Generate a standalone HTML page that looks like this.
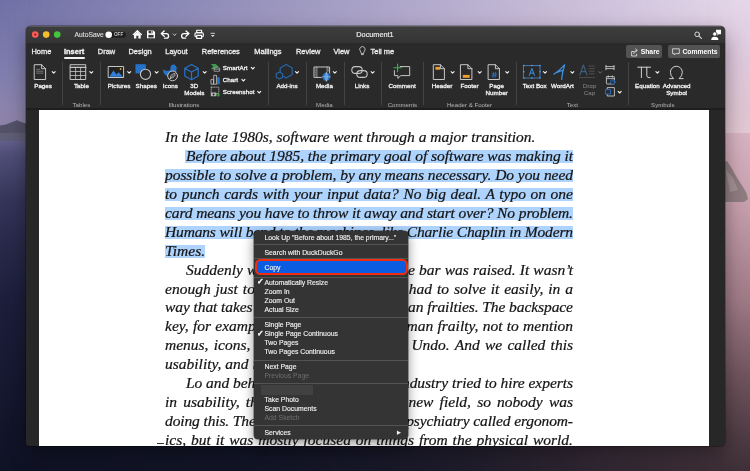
<!DOCTYPE html>
<html lang="en">
<head>
<meta charset="utf-8">
<title>Document1</title>
<style>
*{box-sizing:border-box;margin:0;padding:0}
html,body{width:750px;height:471px;overflow:hidden}
body{position:relative;font-family:"Liberation Sans",sans-serif;background:#1a1c30}
.abs{position:absolute}
#all{position:absolute;left:0;top:0;width:750px;height:471px;will-change:transform}
/* desktop wallpaper */
#bgL{position:absolute;left:0;top:0;width:750px;height:471px;
 background:linear-gradient(to bottom,#6f70a6 0px,#7c7bae 60px,#8a83ad 105px,#8d83a9 122px,#8a80a6 134px,#625f8a 141px,#4f4e78 155px,#34355a 200px,#262848 250px,#1c1f3b 300px,#14172e 400px,#101325 471px)}
#bgRs{position:absolute;left:0;top:0;width:750px;height:133px;
 background:linear-gradient(to bottom,#e6d8ea 0px,#dfc9dc 60px,#dfc5d2 110px,#e2c8d2 133px);
 -webkit-mask-image:linear-gradient(to right,transparent 0px,#000 750px);mask-image:linear-gradient(to right,transparent 0px,#000 750px)}
#bgRw{position:absolute;left:0;top:133px;width:750px;height:338px;
 background:linear-gradient(to bottom,#d6b3c0 0px,#d0aab8 30px,#c8a0ae 67px,#9e7a85 167px,#6d525b 247px,#4d3a42 307px,#3e2f37 338px);
 -webkit-mask-image:linear-gradient(to right,transparent 0px,rgba(0,0,0,.05) 250px,rgba(0,0,0,.15) 375px,rgba(0,0,0,.35) 480px,rgba(0,0,0,.68) 600px,#000 735px);mask-image:linear-gradient(to right,transparent 0px,rgba(0,0,0,.05) 250px,rgba(0,0,0,.15) 375px,rgba(0,0,0,.35) 480px,rgba(0,0,0,.68) 600px,#000 735px)}
#bgS{position:absolute;left:0;top:0;width:750px;height:471px}
/* window */
#win{position:absolute;left:26px;top:26px;width:699px;height:420px;background:#2b2b2b;border-radius:5px 5px 4px 4px;overflow:hidden;box-shadow:0 8px 20px rgba(0,0,0,.38),0 0 0 .5px rgba(0,0,0,.5)}
#titlebar{position:absolute;left:0;top:0;width:699px;height:17px;background:linear-gradient(#3d3d3d,#343434);border-top:1px solid #585858}
#ribbon{position:absolute;left:0;top:17px;width:699px;height:66px;background:#2a2a2a}
#docbg{position:absolute;left:0;top:83px;width:699px;height:337px;background:#272727}
#page{position:absolute;left:13.2px;top:83.6px;width:669.8px;height:337px;background:#fff}
/* document text */
.ln{position:absolute;left:139px;height:19px;font:italic 15.5px/19px "Liberation Serif",serif;color:#141414;white-space:nowrap;-webkit-text-stroke:.22px #141414}
.ln.ind{left:160px}
.hl{position:absolute;height:13.7px;background:#aed3fc}
/* context menu */
#menu{position:absolute;left:254px;top:231px;width:154px;height:208px;background:#343434;border-radius:4px;box-shadow:0 0 0 .5px rgba(0,0,0,.6),0 4px 12px rgba(0,0,0,.45);font-size:6.85px;color:#f4f4f4;-webkit-text-stroke:.12px #f4f4f4}
#menu .mi{position:absolute;left:10.5px;height:9px;line-height:9px;white-space:nowrap}
#menu .dis{color:#6f6f6f;-webkit-text-stroke:0}
#menu .sep{position:absolute;left:0;width:154px;height:1px;background:#535353}
#menu .ck{position:absolute;left:2.6px;height:9px;line-height:9px;font-size:7.6px;font-weight:bold}

/* chrome text */
.tb{position:absolute;top:46.6px;height:10px;line-height:10px;font-size:7.45px;color:#ededed;white-space:nowrap;-webkit-text-stroke:.3px #ededed}
.lb{position:absolute;transform:translateX(-50%);font-size:6.25px;line-height:6.8px;color:#f6f6f6;text-align:center;white-space:nowrap;-webkit-text-stroke:.28px #f6f6f6}
.lb.dim{color:#7a7a7a;-webkit-text-stroke:.1px #7a7a7a}
.gl{position:absolute;transform:translateX(-50%);top:100.9px;font-size:6.1px;line-height:7px;color:#b4b4b4;white-space:nowrap}
.sl{position:absolute;left:222.8px;font-size:6.25px;line-height:7px;color:#f6f6f6;white-space:nowrap;-webkit-text-stroke:.28px #f6f6f6}
.vs{position:absolute;top:61.5px;width:1px;height:43.5px;background:#444}
.btn{position:absolute;top:45.2px;height:13.2px;background:#535353;border-radius:2px;color:#fff;font-size:6.8px;font-weight:bold;line-height:13px;white-space:nowrap}
#svg{position:absolute;left:0;top:0;width:750px;height:471px}
</style>
</head>
<body>
<div id="all">
<div id="bgL"></div>
<div id="bgRs"></div>
<div id="bgRw"></div>
<svg id="bgS" viewBox="0 0 750 471">
<path d="M0 125.6 L6 124.5 L11 122.5 L17 120.3 L21 122 L26 123.5 L40 126 L40 140.5 L0 140.5 Z" fill="#545269"/>
<path d="M0 133 L40 133 L40 140.5 L0 140.5 Z" fill="#65627e" opacity=".7"/>
<path d="M720 163 L727 161 L731 167 L736 176 L741 184 L746 192 L748 199 L744 202 L720 202 Z" fill="#8f7c81"/>
<path d="M726 170 L733 178 L738 190 L730 192 Z" fill="#b5a2a5" opacity=".55"/>
</svg>

<div id="win">
  <div id="titlebar"></div>
  <div id="ribbon"></div>
  <div id="docbg"></div>
  <div class="abs" style="left:0;top:82.3px;width:699px;height:1.5px;background:#1e1e1e"></div>
  <div id="page"></div>

  <!-- selection highlights (window coords) -->
  <div class="hl" style="left:159.4px;top:123.80px;width:387.6px"></div>
  <div class="hl" style="left:139px;top:142.75px;width:408px"></div>
  <div class="hl" style="left:139px;top:161.70px;width:408px"></div>
  <div class="hl" style="left:139px;top:180.65px;width:408px"></div>
  <div class="hl" style="left:139px;top:199.60px;width:408px"></div>
  <div class="hl" style="left:139px;top:218.55px;width:40px"></div>

  <div class="abs" style="left:131px;top:417.2px;width:7px;height:1px;background:#333"></div>
  <!-- document lines -->
  <div class="ln nj" style="top:100.90px">In the late 1980s, software went through a major transition.</div>
  <div class="ln ind" style="top:119.85px;letter-spacing:-0.039px">Before about 1985, the primary goal of software was making it</div>
  <div class="ln" style="top:138.80px;letter-spacing:-0.054px">possible to solve a problem, by any means necessary. Do you need</div>
  <div class="ln" style="top:157.75px;word-spacing:0.738px">to punch cards with your input data? No big deal. A typo on one</div>
  <div class="ln" style="top:176.70px;letter-spacing:-0.105px">card means you have to throw it away and start over? No problem.</div>
  <div class="ln" style="top:195.65px;letter-spacing:-0.159px">Humans will bend to the machines, like Charlie Chaplin in Modern</div>
  <div class="ln nj" style="top:214.60px">Times.</div>
  <div class="ln ind" style="top:233.55px;word-spacing:0.267px">Suddenly with the PC revolution, the bar was raised. It wasn’t</div>
  <div class="ln" style="top:252.50px;word-spacing:1.029px">enough just to solve the problem: you had to solve it easily, in a</div>
  <div class="ln" style="top:271.45px;letter-spacing:-0.081px">way that takes into account typical human frailties. The backspace</div>
  <div class="ln" style="top:290.40px;word-spacing:0.377px">key, for example, to compensate for human frailty, not to mention</div>
  <div class="ln" style="top:309.35px;word-spacing:1.401px">menus, icons, windows, and unlimited Undo. And we called this</div>
  <div class="ln nj" style="top:328.30px">usability, and it was good.</div>
  <div class="ln ind" style="top:347.25px;letter-spacing:-0.052px">Lo and behold, when the software industry tried to hire experts</div>
  <div class="ln" style="top:366.20px;word-spacing:2.283px">in usability, they found that it was a new field, so nobody was</div>
  <div class="ln" style="top:385.15px;letter-spacing:-0.121px">doing this. There was a field of applied psychiatry called ergonom-</div>
  <div class="ln" style="top:404.10px;word-spacing:1.016px">ics, but it was mostly focused on things from the physical world.</div>
</div>


<!-- window chrome text -->
<div class="abs" style="left:74.6px;top:30px;font-size:6.75px;line-height:9px;color:#dcdcdc;-webkit-text-stroke:.15px #dcdcdc">AutoSave</div>
<div class="abs" style="left:325px;width:100px;text-align:center;top:30px;font-size:7.3px;line-height:9px;color:#e8e8e8;-webkit-text-stroke:.2px #e8e8e8">Document1</div>

<div class="tb" style="left:31.5px">Home</div>
<div class="tb" style="left:64px;font-weight:bold;color:#fff">Insert</div>
<div class="abs" style="left:64px;top:57px;width:21px;height:1.8px;background:#f2f2f2;border-radius:1px"></div>
<div class="tb" style="left:97.8px">Draw</div>
<div class="tb" style="left:128.5px">Design</div>
<div class="tb" style="left:165.3px">Layout</div>
<div class="tb" style="left:201.8px">References</div>
<div class="tb" style="left:254.2px">Mailings</div>
<div class="tb" style="left:296px">Review</div>
<div class="tb" style="left:333.5px">View</div>
<div class="tb" style="left:370.6px">Tell me</div>

<div class="btn" style="left:626.3px;width:36.2px;padding-left:14.4px">Share</div>
<div class="btn" style="left:668.3px;width:52.2px;padding-left:14.1px">Comments</div>

<div class="vs" style="left:62px"></div>
<div class="vs" style="left:100.4px"></div>
<div class="vs" style="left:268.3px"></div>
<div class="vs" style="left:306.2px"></div>
<div class="vs" style="left:344px"></div>
<div class="vs" style="left:381.4px"></div>
<div class="vs" style="left:423.4px"></div>
<div class="vs" style="left:515.9px"></div>
<div class="vs" style="left:628.4px"></div>

<div class="lb" style="left:43.1px;top:83.4px">Pages</div>
<div class="lb" style="left:81.4px;top:83.4px">Table</div>
<div class="lb" style="left:119px;top:83.4px">Pictures</div>
<div class="lb" style="left:146.2px;top:83.4px">Shapes</div>
<div class="lb" style="left:170.3px;top:83.4px">Icons</div>
<div class="lb" style="left:194.3px;top:83.2px">3D<br>Models</div>
<div class="sl" style="top:63.8px">SmartArt</div>
<div class="sl" style="top:75.8px">Chart</div>
<div class="sl" style="top:87.8px">Screenshot</div>
<div class="lb" style="left:287px;top:83.4px">Add-ins</div>
<div class="lb" style="left:324.4px;top:83.4px">Media</div>
<div class="lb" style="left:362px;top:83.4px">Links</div>
<div class="lb" style="left:402.1px;top:83.4px">Comment</div>
<div class="lb" style="left:442px;top:83.4px">Header</div>
<div class="lb" style="left:469.5px;top:83.4px">Footer</div>
<div class="lb" style="left:496.6px;top:83.2px">Page<br>Number</div>
<div class="lb" style="left:534.7px;top:83.4px">Text Box</div>
<div class="lb" style="left:562.4px;top:83.4px">WordArt</div>
<div class="lb dim" style="left:589.5px;top:83.2px">Drop<br>Cap</div>
<div class="lb" style="left:647.4px;top:83.4px">Equation</div>
<div class="lb" style="left:676.6px;top:83.2px">Advanced<br>Symbol</div>

<div class="gl" style="left:81.4px">Tables</div>
<div class="gl" style="left:184px">Illustrations</div>
<div class="gl" style="left:324.4px">Media</div>
<div class="gl" style="left:402.4px">Comments</div>
<div class="gl" style="left:469.5px">Header &amp; Footer</div>
<div class="gl" style="left:572.4px">Text</div>
<div class="gl" style="left:662.8px">Symbols</div>

<svg id="svg" viewBox="0 0 750 471" fill="none" stroke-linecap="round" stroke-linejoin="round">

<!-- traffic lights -->
<circle cx="35.2" cy="34.6" r="3.3" fill="#fc5b57"/><circle cx="35.2" cy="34.6" r="1.1" fill="#8c1a10"/>
<circle cx="46.2" cy="34.6" r="3.3" fill="#f3be2e"/>
<circle cx="57.2" cy="34.6" r="3.3" fill="#40c83a"/>
<!-- autosave toggle -->
<rect x="104.9" y="31.2" width="21.6" height="7" rx="3.5" fill="#1d1d1d" stroke="#4a4a4a" stroke-width=".5"/>
<circle cx="108.7" cy="34.7" r="3.3" fill="#fff"/>
<text x="113.9" y="36.2" font-family="Liberation Sans, sans-serif" font-size="4.7" font-weight="bold" fill="#c4c4c4" stroke="none">OFF</text>
<!-- home -->
<path d="M133.2 34.6 L137.35 30.7 L141.5 34.6" stroke="#fff" stroke-width="1.2"/>
<path d="M134 34.6 L137.35 31.7 L140.7 34.6 V38.4 H138.4 V35.8 H136.3 V38.4 H134 Z" fill="#fff"/>
<!-- save -->
<path d="M147 30.4 H153.4 L155 32 V38.3 H147 Z" fill="#fff"/>
<rect x="148.6" y="30.9" width="4" height="2.4" fill="#353535"/><rect x="151.2" y="31.2" width=".9" height="1.6" fill="#fff"/>
<rect x="148.4" y="34.9" width="5.2" height="2.6" fill="#353535"/>
<!-- undo -->
<path d="M164.2 30.9 L161.3 33.6 L164.2 36.3" stroke="#fff" stroke-width="1.3"/>
<path d="M161.6 33.6 H166.3 a2.3 2.3 0 0 1 0 4.6 H164.6" stroke="#fff" stroke-width="1.3"/>
<path d="M173.2 33.9 L174.6 35.5 L176.0 33.9" stroke="#cfcfcf" stroke-width="0.9"/>
<!-- redo -->
<path d="M186 30.9 L188.9 33.6 L186 36.3" stroke="#fff" stroke-width="1.3"/>
<path d="M188.6 33.6 H183.9 a2.3 2.3 0 0 0 0 4.6 H185.6" stroke="#fff" stroke-width="1.3"/>
<!-- print -->
<rect x="196.7" y="30.3" width="4.9" height="2.4" stroke="#fff" stroke-width="1.1"/>
<rect x="195" y="32.7" width="8.3" height="4" rx="1" stroke="#fff" stroke-width="1.1"/>
<rect x="196.7" y="35.4" width="4.9" height="3" fill="#353535" stroke="#fff" stroke-width="1.1"/>
<!-- customize -->
<path d="M211 33.3 H214.6" stroke="#ddd" stroke-width=".9"/><path d="M210.9 35 H214.7 L212.8 37.1 Z" fill="#ddd"/>
<!-- search -->
<circle cx="697.2" cy="34.3" r="2.3" stroke="#e0e0e0" stroke-width=".95"/><path d="M699 36.1 L701.4 38.4" stroke="#e0e0e0" stroke-width="1.1"/>
<!-- user -->
<path d="M716 29.8 H721 V34.2 H718.6 L717.3 35.4 V34.2 H716 Z" fill="#fff"/>
<circle cx="714.8" cy="34" r="2.1" fill="#fff" stroke="#353535" stroke-width=".6"/>
<path d="M711.2 39.9 Q711.2 36.7 714.8 36.7 Q718.4 36.7 718.4 39.9 Z" fill="#fff"/>
<!-- lightbulb -->
<path d="M361.2 53.2 Q361.2 52 360.3 51 A2.7 2.7 0 1 1 364.5 51 Q363.6 52 363.6 53.2 Z" stroke="#d8d8d8" stroke-width=".8"/><path d="M361.4 54.6 H363.4" stroke="#d8d8d8" stroke-width=".8"/>
<!-- share icon -->
<path d="M633.5 51.5 H631.6 V56 H636.6 V54.2" stroke="#e8e8e8" stroke-width=".8"/><path d="M633.6 53.6 Q633.8 50.6 636.8 50.4 M635.6 48.9 L637.3 50.4 L635.6 51.9" stroke="#e8e8e8" stroke-width=".8"/>
<!-- comments icon -->
<path d="M673 48.8 H679.3 V53.6 H675.6 L674.3 55 V53.6 H673 Z" stroke="#e8e8e8" stroke-width=".8"/>

<!-- Pages -->
<path d="M34.6 64.7 H41.6 L45.6 68.7 V79.5 H34.6 Z M41.6 64.7 V68.7 H45.6" stroke="#c6c6c6" stroke-width="1"/>
<path d="M36.6 69.3 H39.8 M36.6 71.2 H43 M36.6 73.1 H43" stroke="#8a8a8a" stroke-width=".8"/>
<path d="M52.2 71.6 L53.7 73.2 L55.2 71.6" stroke="#f0f0f0" stroke-width="1.1"/>
<!-- Table -->
<rect x="70.5" y="64.7" width="15.2" height="14.8" stroke="#c6c6c6" stroke-width="1"/>
<path d="M70.5 67.4 H85.7" stroke="#c6c6c6" stroke-width="1.4"/>
<path d="M75.6 67.4 V79.5 M80.6 67.4 V79.5 M70.5 71.5 H85.7 M70.5 75.5 H85.7" stroke="#c6c6c6" stroke-width=".8"/>
<path d="M89.8 71.6 L91.3 73.2 L92.8 71.6" stroke="#f0f0f0" stroke-width="1.1"/>
<!-- Pictures -->
<rect x="108.6" y="66.5" width="15" height="11" fill="#222" stroke="#c6c6c6" stroke-width="1"/>
<path d="M109.3 76.8 L113.4 70.6 L116.4 74.6 L118.6 72.3 L122.9 76.8 Z" fill="#2f80d8"/>
<circle cx="120.6" cy="69" r=".9" fill="#e8a33d"/>
<path d="M127.7 71.6 L129.2 73.2 L130.7 71.6" stroke="#f0f0f0" stroke-width="1.1"/>
<!-- Shapes -->
<rect x="135.5" y="64.2" width="10.3" height="9.2" fill="#2573c9"/>
<circle cx="145.5" cy="74.3" r="5.1" fill="#2b2b2b" stroke="#c6c6c6" stroke-width="1.1"/>
<path d="M155.1 71.6 L156.6 73.2 L158.1 71.6" stroke="#f0f0f0" stroke-width="1.1"/>
<!-- Icons (duck + leaf) -->
<path d="M162.9 69.3 Q165.5 71.6 169.8 70.4 Q170.2 69.6 170.6 68.6 A3 3 0 1 1 176.3 68.3 L178.3 67.2 L176.2 69.6 Q177.3 73.5 174 76.6 H169 Q163.2 76 162.9 69.3 Z" fill="#2573c9"/>
<circle cx="172.6" cy="75.9" r="4.9" fill="#2b2b2b" stroke="#c6c6c6" stroke-width="1"/>
<path d="M170.4 78.2 Q169.9 74.2 175 73.5 Q175.4 78 170.4 78.2 Z M169.7 78.9 L173.2 75.4" stroke="#c6c6c6" stroke-width=".8"/>
<!-- 3D Models -->
<path d="M191.5 64.4 L198.2 68.2 V75.9 L191.5 79.7 L184.8 75.9 V68.2 Z M184.8 68.2 L191.5 72 L198.2 68.2 M191.5 72 V79.7" stroke="#2573c9" stroke-width="1.2"/>
<path d="M203.2 71.6 L204.7 73.2 L206.2 71.6" stroke="#f0f0f0" stroke-width="1.1"/>
<!-- SmartArt -->
<path d="M210.8 63.9 H215.6 L218.7 66.6 L215.6 69.3 H210.8 L213.2 66.6 Z" fill="#3a9a50"/>
<rect x="214.6" y="68" width="5" height="3.3" fill="#2b2b2b" stroke="#b8b8b8" stroke-width=".7"/><path d="M214.6 69.6 H219.6" stroke="#b8b8b8" stroke-width=".5"/>
<path d="M251.3 67.4 L252.8 69.0 L254.3 67.4" stroke="#f0f0f0" stroke-width="1.1"/>
<!-- Chart -->
<rect x="211.3" y="79.6" width="2.3" height="4.6" stroke="#c6c6c6" stroke-width=".8"/>
<rect x="214.1" y="75.3" width="2.5" height="8.9" stroke="#c6c6c6" stroke-width=".8"/>
<rect x="217" y="77.3" width="2.8" height="7" fill="#2573c9"/>
<path d="M241.9 79.4 L243.4 81.0 L244.9 79.4" stroke="#f0f0f0" stroke-width="1.1"/>
<!-- Screenshot -->
<rect x="211.2" y="87.2" width="7.6" height="6.4" stroke="#a8a8a8" stroke-width=".8" stroke-dasharray="1.3 1"/>
<rect x="210.8" y="92.4" width="5.6" height="3.9" rx=".5" fill="#b8b8b8"/><circle cx="213.6" cy="94.4" r="1" fill="#2b2b2b"/>
<path d="M218.3 93.6 V96.4 M216.9 95 H219.7" stroke="#3cb54a" stroke-width=".9"/>
<path d="M257.7 91.4 L259.2 93.0 L260.7 91.4" stroke="#f0f0f0" stroke-width="1.1"/>
<!-- Add-ins -->
<path d="M286.2 64.5 L292.2 67.9 V74.6 L286.2 78 L280.2 74.6 V67.9 Z" stroke="#2566ab" stroke-width="1.2"/>
<path d="M279.4 71.9 L282.6 73.7 V77.2 L279.4 79 L276.2 77.2 V73.7 Z" fill="#2b2b2b" stroke="#2566ab" stroke-width="1.2"/>
<path d="M295.5 71.6 L297.0 73.2 L298.5 71.6" stroke="#f0f0f0" stroke-width="1.1"/>
<!-- Media -->
<rect x="314.4" y="67" width="15.2" height="10.4" stroke="#c6c6c6" stroke-width="1"/>
<path d="M316.9 67 V77.4 M327.1 67 V77.4" stroke="#c6c6c6" stroke-width=".7"/>
<path d="M315.65 68.6 V76" stroke="#9a9a9a" stroke-width=".7" stroke-dasharray=".7 1.1"/><path d="M328.35 68.6 V72" stroke="#9a9a9a" stroke-width=".7" stroke-dasharray=".7 1.1"/>
<circle cx="326.4" cy="76.8" r="4.4" fill="#2573c9" stroke="#2b2b2b" stroke-width=".8"/>
<path d="M322.2 76.8 H330.6 M326.4 72.6 V81 M326.4 72.6 Q323.4 76.8 326.4 81 M326.4 72.6 Q329.4 76.8 326.4 81" stroke="#cfe0f5" stroke-width=".5" opacity=".85"/>
<path d="M333.3 71.6 L334.8 73.2 L336.3 71.6" stroke="#f0f0f0" stroke-width="1.1"/>
<!-- Links -->
<rect x="351.8" y="66.6" width="10.4" height="6.8" rx="3.4" stroke="#c6c6c6" stroke-width="1.1"/>
<rect x="356.8" y="70.6" width="10.4" height="6.8" rx="3.4" stroke="#c6c6c6" stroke-width="1.1"/>
<path d="M371.1 71.6 L372.6 73.2 L374.1 71.6" stroke="#f0f0f0" stroke-width="1.1"/>
<!-- Comment -->
<path d="M400.2 66.6 H409.7 V75.6 H400.8 L397.9 78.4 V75.6 H394.4 V70.6" stroke="#c6c6c6" stroke-width="1"/>
<path d="M397.6 64 V71.6 M393.8 67.8 H401.4" stroke="#3cb54a" stroke-width="1.1"/>
<!-- Header -->
<path d="M433.7 64.7 H440.4 L444.4 68.7 V79.5 H433.7 Z M440.4 64.7 V68.7 H444.4" stroke="#c6c6c6" stroke-width="1"/>
<rect x="435.4" y="66.9" width="4.6" height="2.8" fill="#f0a030"/>
<path d="M451.1 71.6 L452.6 73.2 L454.1 71.6" stroke="#f0f0f0" stroke-width="1.1"/>
<!-- Footer -->
<path d="M460.8 64.7 H467.9 L471.9 68.7 V79.5 H460.8 Z M467.9 64.7 V68.7 H471.9" stroke="#c6c6c6" stroke-width="1"/>
<rect x="462.8" y="74.9" width="6.8" height="2.9" fill="#f0a030"/>
<path d="M478.2 71.6 L479.7 73.2 L481.2 71.6" stroke="#f0f0f0" stroke-width="1.1"/>
<!-- Page Number -->
<path d="M488.5 64.7 H495.4 L499.4 68.7 V79.5 H488.5 Z M495.4 64.7 V68.7 H499.4" stroke="#c6c6c6" stroke-width="1"/>
<path d="M493.6 72.4 L493 77.4 M495.6 72.4 L495 77.4 M492.2 74 H496.6 M491.9 75.8 H496.3" stroke="#2573c9" stroke-width=".8"/>
<path d="M505.7 71.6 L507.2 73.2 L508.7 71.6" stroke="#f0f0f0" stroke-width="1.1"/>
<!-- Text Box -->
<rect x="523.8" y="65.6" width="16.2" height="12.4" stroke="#4a90d9" stroke-width=".8"/>
<path d="M523.8 65.6 h.01 M540 65.6 h.01 M523.8 78 h.01 M540 78 h.01 M531.9 65.6 h.01 M531.9 78 h.01 M523.8 71.8 h.01 M540 71.8 h.01" stroke="#6aa8e6" stroke-width="1.5"/>
<path d="M529.3 75.4 L531.9 68.5 L534.5 75.4 M530.3 73.1 H533.5" stroke="#3d8fe0" stroke-width="1"/>
<path d="M543.5 71.6 L545.0 73.2 L546.5 71.6" stroke="#f0f0f0" stroke-width="1.1"/>
<!-- WordArt -->
<path d="M553.8 74.2 Q559.5 70.5 564.6 64.8 Q562.4 72 561.6 79.4 M556.6 72.8 Q560 71 563.6 70.2" stroke="#3d8fe0" stroke-width="1.25"/>
<path d="M570.8 71.6 L572.3 73.2 L573.8 71.6" stroke="#f0f0f0" stroke-width="1.1"/>
<!-- Drop Cap (disabled) -->
<path d="M579.8 75 L583.4 65 L587 75 M581.2 71.6 H585.6" stroke="#3f5f80" stroke-width="1.1"/>
<path d="M589 66 H594.4 M589 68.6 H594.4 M589 71.2 H594.4 M589 73.8 H594.4 M579.6 77.6 H594.4" stroke="#585858" stroke-width=".8"/>
<path d="M598.8 71.6 L600.3 73.2 L601.8 71.6" stroke="#6a6a6a" stroke-width="1.0"/>
<!-- small text icons -->
<path d="M606 65.4 V69.8 M614 65.4 V69.8 M606 66.6 H614 M606 68.6 H614" stroke="#c6c6c6" stroke-width=".9"/>
<rect x="606.4" y="76.6" width="8" height="7.4" rx=".6" stroke="#c6c6c6" stroke-width=".9"/><path d="M606.4 78.6 H614.4 M608.4 75.8 V77.2 M612.4 75.8 V77.2" stroke="#c6c6c6" stroke-width=".8"/>
<circle cx="612.8" cy="82" r="2.3" fill="#2b2b2b" stroke="#2573c9" stroke-width=".9"/><path d="M612.8 80.8 V82 H613.8" stroke="#2573c9" stroke-width=".6"/>
<rect x="607.6" y="87.6" width="6.8" height="8.4" stroke="#c6c6c6" stroke-width=".9"/>
<rect x="605.8" y="89.6" width="4.8" height="4.4" fill="#2b2b2b" stroke="#2573c9" stroke-width=".9"/>
<path d="M618.2 91.4 L619.7 93.0 L621.2 91.4" stroke="#f0f0f0" stroke-width="1.1"/>
<!-- Equation pi -->
<path d="M637.8 67.2 H650.6 M641.4 67.2 V77.6 M646.8 67.2 V75.4 Q646.8 77.6 649 77.6 H650.2" stroke="#d2d2d2" stroke-width="1"/>
<path d="M655.9 71.6 L657.4 73.2 L658.9 71.6" stroke="#f0f0f0" stroke-width="1.1"/>
<!-- Omega -->
<path d="M669.6 78.6 H673.6 Q670.4 76 670.4 72.2 A5.95 5.95 0 0 1 682.3 72.2 Q682.3 76 679.1 78.6 H683.1" stroke="#d2d2d2" stroke-width="1"/>

</svg>

<!-- context menu -->
<div id="menu">
  <div class="mi" style="top:2px">Look Up "Before about 1985, the primary..."</div>
  <div class="sep" style="top:13.3px"></div>
  <div class="mi" style="top:16.5px">Search with DuckDuckGo</div>
  <div class="sep" style="top:27.1px"></div>
  <div class="abs" style="left:.5px;top:27.9px;width:153.5px;height:16.4px;border:2.8px solid #f22c0e;border-radius:5.5px;background:#0c5ce2"></div>
  <div class="mi" style="top:31.6px">Copy</div>
  <div class="sep" style="top:45.6px"></div>
  <div class="ck" style="top:46.4px">✓</div>
  <div class="mi" style="top:46.5px">Automatically Resize</div>
  <div class="mi" style="top:55.7px">Zoom In</div>
  <div class="mi" style="top:64.9px">Zoom Out</div>
  <div class="mi" style="top:74.1px">Actual Size</div>
  <div class="sep" style="top:86px"></div>
  <div class="mi" style="top:88.7px">Single Page</div>
  <div class="ck" style="top:97.9px">✓</div>
  <div class="mi" style="top:97.9px">Single Page Continuous</div>
  <div class="mi" style="top:107.1px">Two Pages</div>
  <div class="mi" style="top:116.3px">Two Pages Continuous</div>
  <div class="sep" style="top:128.5px"></div>
  <div class="mi" style="top:131px">Next Page</div>
  <div class="mi dis" style="top:140.2px">Previous Page</div>
  <div class="sep" style="top:152.3px"></div>
  <div class="abs" style="left:6.5px;top:154px;width:52px;height:9.5px;background:#414141"></div>
  <div class="mi" style="top:164px">Take Photo</div>
  <div class="mi" style="top:173px">Scan Documents</div>
  <div class="mi dis" style="top:182.2px">Add Sketch</div>
  <div class="sep" style="top:194px"></div>
  <div class="mi" style="top:197px">Services</div>
  <div class="abs" style="left:143px;top:197px;font-size:5px;line-height:9px">▶</div>
</div>
</div>
</body>
</html>
